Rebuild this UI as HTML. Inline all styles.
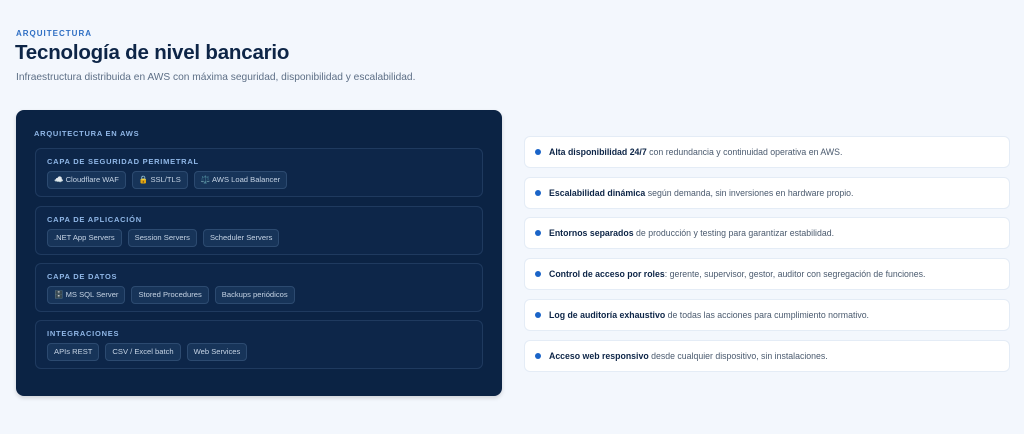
<!DOCTYPE html>
<html><head><meta charset="utf-8"><style>
*{box-sizing:border-box;margin:0;padding:0}
body{width:1024px;height:434px;background:#f3f7fd;font-family:"Liberation Sans",sans-serif;position:relative;overflow:hidden}
.eyebrow{position:absolute;left:16px;top:29px;font-size:8px;font-weight:bold;letter-spacing:1px;color:#2f6fc4}
h1{position:absolute;left:15px;top:41px;font-size:20.5px;font-weight:bold;color:#0d2547;letter-spacing:-0.2px}
.sub{position:absolute;left:16px;top:72px;font-size:10.2px;color:#5d6f86}
.panel{position:absolute;left:16px;top:110px;width:486px;height:286px;background:#0b2344;border-radius:8px;box-shadow:0 2px 4px rgba(0,0,0,.15)}
.ptitle{position:absolute;left:18px;top:19px;font-size:7.5px;font-weight:bold;letter-spacing:0.75px;color:#8fb6e6}
.grp{position:absolute;left:19px;width:448px;height:49px;border:1px solid #1f3a5f;border-radius:6px;background:#0d2649}
.gl{position:absolute;left:11px;top:8px;font-size:7.5px;font-weight:bold;letter-spacing:0.75px;color:#8fb6e6}
.chips{position:absolute;left:11px;top:22px;display:flex;gap:6px}
.chip{height:18px;line-height:16px;padding:0 6px;border:1px solid #2c4a70;background:#173459;border-radius:4px;font-size:7.6px;color:#c5d3e4;white-space:nowrap}
.item{position:absolute;left:524px;width:486px;height:32px;background:#fff;border:1px solid #e4ecf6;border-radius:6px;font-size:8.75px;color:#4a5a6e;line-height:30px;padding-left:24px}
.item::before{content:"";position:absolute;left:10px;top:12px;width:6px;height:6px;border-radius:50%;background:#1a64c8}
.item b{color:#0d2547}
</style></head><body>
<div class="eyebrow">ARQUITECTURA</div>
<h1>Tecnología de nivel bancario</h1>
<div class="sub">Infraestructura distribuida en AWS con máxima seguridad, disponibilidad y escalabilidad.</div>
<div class="panel">
<div class="ptitle">ARQUITECTURA EN AWS</div>
<div class="grp" style="top:38px"><div class="gl">CAPA DE SEGURIDAD PERIMETRAL</div><div class="chips"><span class="chip">☁️ Cloudflare WAF</span><span class="chip">🔒 SSL/TLS</span><span class="chip">⚖️ AWS Load Balancer</span></div></div>
<div class="grp" style="top:96px"><div class="gl">CAPA DE APLICACIÓN</div><div class="chips"><span class="chip">.NET App Servers</span><span class="chip">Session Servers</span><span class="chip">Scheduler Servers</span></div></div>
<div class="grp" style="top:153px"><div class="gl">CAPA DE DATOS</div><div class="chips"><span class="chip">🗄️ MS SQL Server</span><span class="chip">Stored Procedures</span><span class="chip">Backups periódicos</span></div></div>
<div class="grp" style="top:210px"><div class="gl">INTEGRACIONES</div><div class="chips"><span class="chip">APIs REST</span><span class="chip">CSV / Excel batch</span><span class="chip">Web Services</span></div></div>
</div>
<div class="item" style="top:136px"><b>Alta disponibilidad 24/7</b> con redundancia y continuidad operativa en AWS.</div>
<div class="item" style="top:177px"><b>Escalabilidad dinámica</b> según demanda, sin inversiones en hardware propio.</div>
<div class="item" style="top:217px"><b>Entornos separados</b> de producción y testing para garantizar estabilidad.</div>
<div class="item" style="top:258px"><b>Control de acceso por roles</b>: gerente, supervisor, gestor, auditor con segregación de funciones.</div>
<div class="item" style="top:299px"><b>Log de auditoría exhaustivo</b> de todas las acciones para cumplimiento normativo.</div>
<div class="item" style="top:340px"><b>Acceso web responsivo</b> desde cualquier dispositivo, sin instalaciones.</div>
</body></html>
